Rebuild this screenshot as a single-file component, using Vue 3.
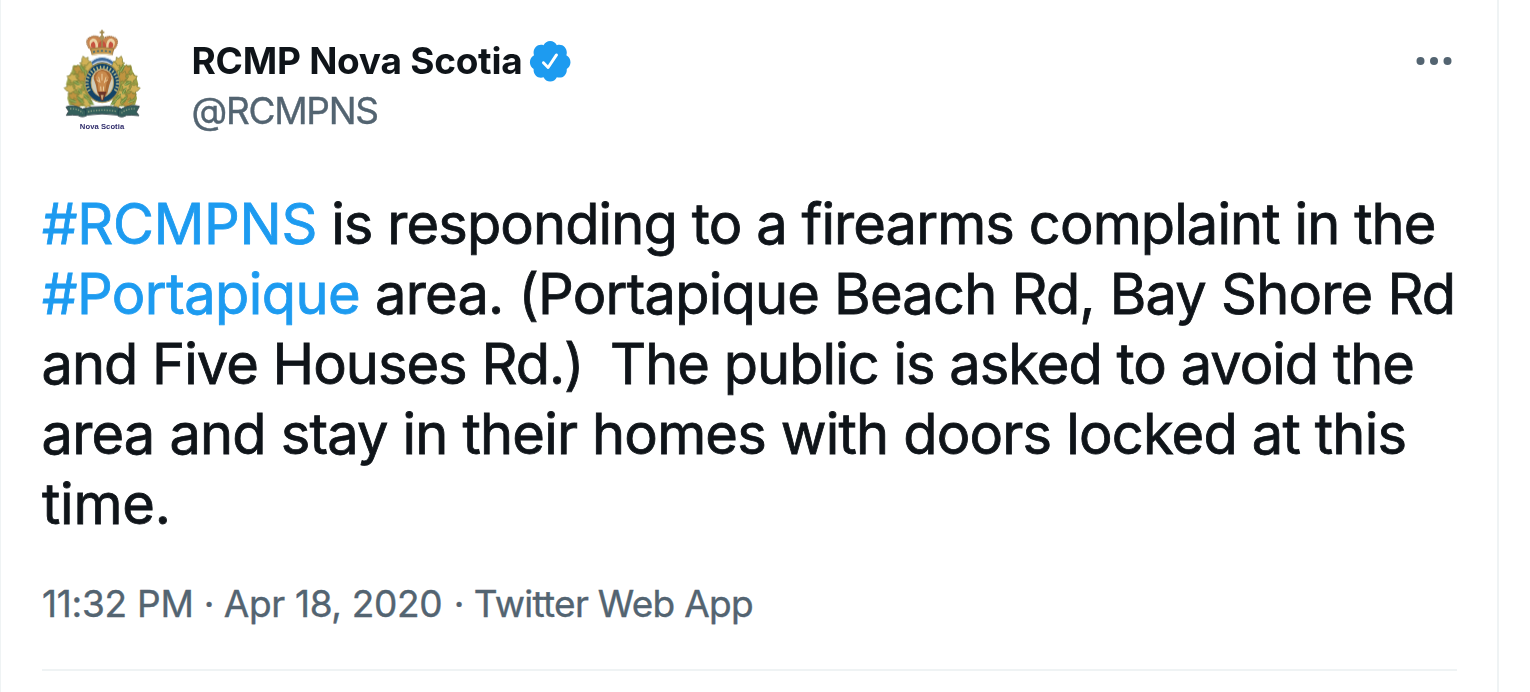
<script setup>
const leaves = [
  [166, 142, -20], [146, 166, -55], [178, 158, 15], [130, 190, -70], [156, 186, -25],
  [122, 222, -80], [146, 214, -40], [132, 246, -60], [158, 240, -20], [172, 262, -35], [140, 264, -75]
]
const greens = [
  [168, 176, -10], [140, 204, -60], [150, 228, -30], [168, 246, -40], [128, 258, -70],
  [182, 262, -50], [156, 160, -30], [150, 254, -50], [166, 216, -15]
]
const lettering = Array.from({ length: 20 }, (_, i) => -210 + i * 12.6)
</script>

<template>
  <main class="tweet">
    <header class="head">
      <svg class="avatar" viewBox="36 39 360 360" role="img" aria-label="RCMP Nova Scotia crest">
        <circle cx="216" cy="219" r="180" fill="#fff" />
        <g class="crest">
          <g v-for="side in [1, -1]" :key="side" :transform="side === 1 ? '' : 'translate(433 0) scale(-1 1)'">
            <path d="M160 128l12 14 12-4 4 40-4 84-24 12-42-4-6-20 4-20-8-22 6-22 10-14 6-22 20 2z" fill="#9a9f45" />
            <g v-for="(l, i) in leaves" :key="i" :transform="`translate(${l[0]} ${l[1]}) rotate(${l[2]})`">
              <path d="M0 17l-5-7-9 2 3-9-6-7 8 0 2-8 7-8 5 9 8-1-3 9 5 8-9 1z" :fill="i % 3 === 1 ? '#bf9440' : '#d0b156'" stroke="#7f7f38" stroke-width="2" />
            </g>
            <g v-for="(l, i) in greens" :key="'g' + i" :transform="`translate(${l[0]} ${l[1]}) rotate(${l[2]})`">
              <path d="M0 13q-10-10 0-26 10 15 0 26z" fill="#668a3e" />
              <path d="M0 12V-9" stroke="#c7c46d" stroke-width="2" />
            </g>
          </g>
          <path d="M184 139q32-25 66 0l-7 21h-52z" fill="#3f6c9f" />
          <path d="M184 139q32-25 66 0M188 149q28-20 57 0" fill="none" stroke="#d9e4ee" stroke-width="3.5" />
          <ellipse cx="217" cy="203" rx="52" ry="59" fill="#124468" stroke="#a38e4c" stroke-width="4" />
          <ellipse
            v-for="a in lettering" :key="a" cx="217" cy="157" rx="2.4" ry="6"
            :transform="`rotate(${a + 90} 217 203)`" fill="#b3b98a"
          />
          <ellipse cx="217" cy="203" rx="34" ry="42" fill="#cfcdbb" stroke="#b99d57" stroke-width="2.5" />
          <path d="M217 163q-27 5-26 28l7 20 4 22 14 22 16-20 6-25 7-20q-1-22-28-27z" fill="#aa6a33" />
          <path d="M205 171q10-7 23 1l9 15-7 16-5 26-9 12-10-14-3-24-7-16z" fill="#c98a4c" />
          <path d="M216 176v20M206 186l4 17M228 186l-5 18M200 195l7 4M233 195l-7 4M212 214l1 14M221 214l-1 14" fill="none" stroke="#ecd0a2" stroke-width="3" />
          <path d="M204 230h25l-9 27h-7z" fill="#6b3429" />
          <path d="M212 240h9l-3 14h-3z" fill="#c9a679" />
          <path d="M108 276q22-10 50 6 28-9 58-7 35-4 58 7 26-16 54-8l-9 17 8 11q-24-3-38-1-16 10-28-1-46-7-88 0-15 10-29 1-17-2-35 0l7-12z" fill="#34605c" stroke="#3a4c52" stroke-width="3" />
          <path d="M120 281q24-1 38 13M174 290q42-9 84-1M274 294q17-14 40-13" fill="none" stroke="#8da287" stroke-width="4" stroke-dasharray="4 4" />
          <path d="M158 283q13-3 9 17M274 283q-13-3-9 17" fill="none" stroke="#22484f" stroke-width="4" />
          <path d="M177 99q-15-25 5-33 21-9 34 10 15-18 36-9 19 8 3 33l-8 13h-62z" fill="#c9854f" />
          <path d="M183 97q-12-19 5-27 16-1 17 28zM250 97q12-20-5-27-16-1-17 28z" fill="#ecd3a5" />
          <path d="M184 97q-5-14 7-18 7 7 5 20zM205 99q-3-17 11-23 15 6 12 23zM248 97q6-14-7-18-7 7-5 20z" fill="#c6523f" />
          <path d="M177 99q-16-25 5-33 21-9 34 10 15-18 36-9 19 8 3 33" fill="none" stroke="#a57a4c" stroke-width="4" stroke-dasharray="4 2" />
          <path d="M216 76v22M216 45v18M209 52h14" stroke="#9f874d" stroke-width="5" />
          <circle cx="216" cy="68" r="7" fill="#a9935c" />
          <path d="M182 101q34-9 69 0l-4 19q-31-8-61 0z" fill="#c3964e" stroke="#876b3e" stroke-width="2" />
          <path d="M189 111q28-7 55 0" fill="none" stroke="#456e79" stroke-width="5" stroke-dasharray="6 6" />
          <path d="M186 121q31-8 61 0" fill="none" stroke="#ead9b5" stroke-width="4" />
        </g>
        <text class="caption" x="216" y="342" text-anchor="middle" textLength="133">Nova Scotia</text>
      </svg>
      <div class="who">
        <div class="name-row">
          <span class="name">RCMP Nova Scotia</span>
          <svg class="badge" viewBox="0 0 24 24" aria-label="Verified account">
            <path d="M22.5 12.5c0-1.58-.875-2.95-2.148-3.6.154-.435.238-.905.238-1.4 0-2.21-1.71-3.998-3.818-3.998-.47 0-.92.084-1.336.25C14.818 2.415 13.51 1.5 12 1.5s-2.816.917-3.437 2.25c-.415-.165-.866-.25-1.336-.25-2.11 0-3.818 1.79-3.818 4 0 .494.083.964.237 1.4-1.272.65-2.147 2.018-2.147 3.6 0 1.495.782 2.798 1.942 3.486-.02.17-.032.34-.032.514 0 2.21 1.708 4 3.818 4 .47 0 .92-.086 1.335-.25.62 1.334 1.926 2.25 3.437 2.25 1.512 0 2.818-.916 3.437-2.25.415.163.865.248 1.336.248 2.11 0 3.818-1.79 3.818-4 0-.174-.012-.344-.033-.513 1.158-.687 1.943-1.99 1.943-3.484zm-6.616-3.334l-4.334 6.5c-.145.217-.382.334-.625.334-.143 0-.288-.04-.416-.126l-.115-.094-2.415-2.415c-.293-.293-.293-.768 0-1.06s.768-.294 1.06 0l1.77 1.767 3.825-5.74c.23-.345.696-.436 1.04-.207.346.23.44.696.21 1.04z" />
          </svg>
        </div>
        <div class="handle">@RCMPNS</div>
      </div>
      <svg class="more" viewBox="0 0 36 10" aria-label="More">
        <circle cx="4.5" cy="5" r="4" /><circle cx="18" cy="5" r="4" /><circle cx="31.5" cy="5" r="4" />
      </svg>
    </header>

    <div class="body">
      <div class="line l1"><a class="tag">#RCMPNS</a><span>is responding to a firearms complaint in the</span></div>
      <div class="line l2"><a class="tag">#Portapique</a><span>area. (Portapique Beach Rd, Bay Shore Rd</span></div>
      <div class="line l3"><span>and Five Houses Rd.)</span><span>The public is asked to avoid the</span></div>
      <div class="line l4"><span>area and stay in their homes with doors locked at this</span></div>
      <div class="line l5"><span>time.</span></div>
    </div>

    <div class="meta">
      <span class="time">11:32 PM</span><span class="dot">·</span><span class="date">Apr 18, 2020</span><span class="dot last">·</span><span class="app">Twitter Web App</span>
    </div>
  </main>
</template>

<style>
body { margin: 0; background: #fff; }
</style>

<style scoped>
.tweet {
  box-sizing: border-box;
  width: 1499px;
  height: 692px;
  overflow: hidden;
  padding: 28px 40px 0 41px;
  border-left: 1px solid #eff3f4;
  border-right: 2px solid #eff3f4;
  background: #fff;
  color: #0f1419;
  font-family: Inter, "Liberation Sans", sans-serif;
}
.head { display: flex; align-items: flex-start; height: 161px; }
.avatar { width: 120px; height: 120px; flex: none; }
.crest { filter: blur(1.3px); }
.caption { font: 700 23px "Liberation Sans", sans-serif; fill: #2f2c6b; }
.who { margin: 8px 0 0 29.5px; }
.name-row { display: flex; align-items: center; height: 50px; }
.name { font-size: 37px; line-height: 50px; font-weight: 700; letter-spacing: -0.25px; white-space: nowrap; }
.badge { width: 46.4px; height: 46.4px; margin-left: 5px; fill: #1d9bf0; }
.handle { font-size: 37px; line-height: 50px; letter-spacing: -1.3px; color: #536471; -webkit-text-stroke: 0.4px; }
.more { width: 36px; height: 10px; margin: 28px 5.5px 0 auto; fill: #536471; }
.body { font-size: 56px; line-height: 70px; -webkit-text-stroke: 0.8px; }
.line { display: flex; height: 70px; white-space: nowrap; }
.tag { color: #1d9bf0; }
.l1 .tag { letter-spacing: -0.25px; }
.l1 span { letter-spacing: -0.9px; margin-left: 14px; }
.l2 .tag { letter-spacing: -0.58px; }
.l2 span { letter-spacing: -0.79px; margin-left: 15px; }
.l3 { letter-spacing: -0.99px; margin-left: -0.5px; }
.l3 span + span { margin-left: 26.5px; }
.l4 { letter-spacing: -0.82px; margin-left: -0.5px; }
.l5 { letter-spacing: -0.2px; }
.meta {
  display: flex;
  height: 90px;
  margin-top: 40px;
  border-bottom: 2px solid #eff3f4;
  color: #536471;
  font-size: 37px;
  line-height: 50px;
  white-space: nowrap;
  -webkit-text-stroke: 0.4px;
}
.time { letter-spacing: -0.25px; }
.date { letter-spacing: -0.35px; }
.app { letter-spacing: -0.7px; }
.dot { margin: 0 9.5px 0 10px; }
.dot.last { margin: 0 9.5px 0 11.5px; }
</style>
